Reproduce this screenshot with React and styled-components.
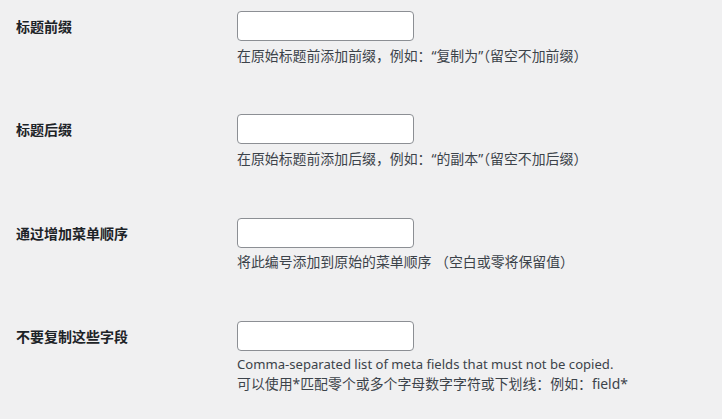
import React from 'react'
import styled, { createGlobalStyle } from 'styled-components'

const GlobalStyle = createGlobalStyle`
  html, body {
    margin: 0;
    padding: 0;
    background: #f0f0f1;
  }
  body {
    font-family: "Noto Sans", "Noto Sans CJK SC", sans-serif;
    color: #1d2327;
  }
`

const Table = styled.div`
  padding-left: 16px;
`

const Row = styled.div`
  display: grid;
  grid-template-columns: 221px 1fr;
  padding: 11px 0 38.8px;
`

const Label = styled.label`
  padding-top: 5px;
  font-size: 14px;
  line-height: 20px;
  font-weight: 700;
  font-family: "Noto Sans CJK SC", "Noto Sans", sans-serif;
  color: #1d2327;
`

const Field = styled.div`
  display: flex;
  flex-direction: column;
  align-items: flex-start;
`

const Input = styled.input`
  box-sizing: border-box;
  width: 177px;
  height: 30px;
  margin: 0;
  padding: 0 8px;
  background: #fff;
  border: 1px solid #8c8f94;
  border-radius: 4px;
  font-size: 14px;
  outline: none;
`

const Description = styled.p`
  margin: 4.5px 0 0;
  line-height: 19px;
  color: #3c434a;
`

const Line = styled.span`
  display: block;
  font-size: ${(p) => (p.$latin ? '13.1px' : '13.9px')};
`

const rows = [
  { label: '标题前缀', desc: ['在原始标题前添加前缀，例如：“复制为”（留空不加前缀）'] },
  { label: '标题后缀', desc: ['在原始标题前添加后缀，例如：“的副本”（留空不加后缀）'] },
  { label: '通过增加菜单顺序', desc: ['将此编号添加到原始的菜单顺序 （空白或零将保留值）'] },
  {
    label: '不要复制这些字段',
    desc: [
      'Comma-separated list of meta fields that must not be copied.',
      '可以使用*匹配零个或多个字母数字字符或下划线：例如：field*',
    ],
  },
]

export default function App() {
  return (
    <>
      <GlobalStyle />
      <Table>
        {rows.map((r) => (
          <Row key={r.label}>
            <Label>{r.label}</Label>
            <Field>
              <Input type="text" />
              <Description>
                {r.desc.map((line, i) => (
                  <Line key={i} $latin={/^[\x00-\x7f]+$/.test(line)}>
                    {line}
                  </Line>
                ))}
              </Description>
            </Field>
          </Row>
        ))}
      </Table>
    </>
  )
}
